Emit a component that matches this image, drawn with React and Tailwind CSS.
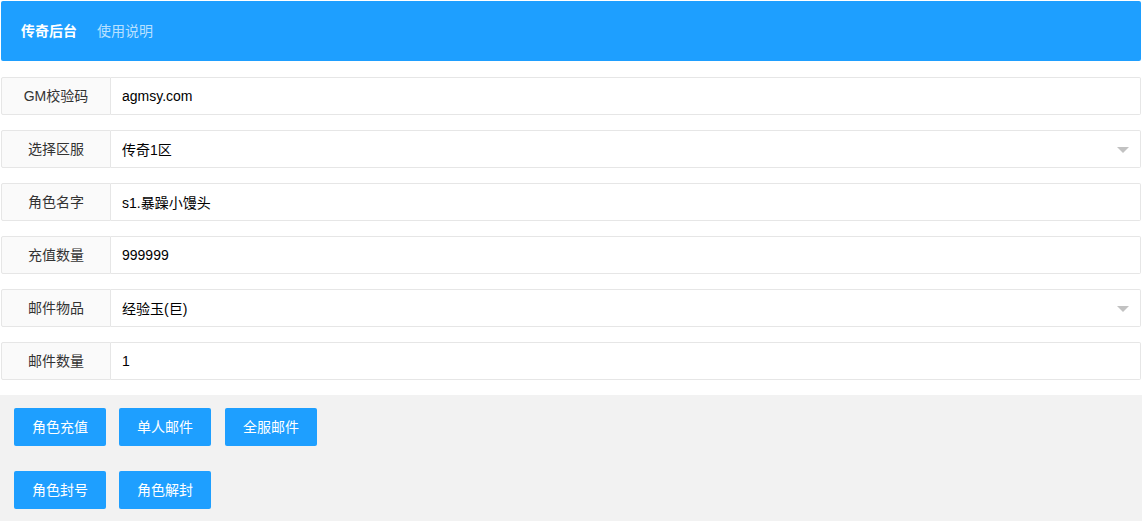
import { useState } from 'react';

const ROWS = [
  { label: 'GM校验码', value: 'agmsy.com' },
  { label: '选择区服', value: '传奇1区', select: true },
  { label: '角色名字', value: 's1.暴躁小馒头' },
  { label: '充值数量', value: '999999' },
  { label: '邮件物品', value: '经验玉(巨)', select: true },
  { label: '邮件数量', value: '1' },
];

const BUTTONS = [
  ['角色充值', '单人邮件', '全服邮件'],
  ['角色封号', '角色解封'],
];

function FormRow({ label, value, select }) {
  const [val, setVal] = useState(value);
  return (
    <div className="flex h-[38px] mb-[15px] mr-px">
      <div className="w-[110px] shrink-0 flex items-center justify-center bg-[#fafafa] border border-[#e6e6e6] rounded-l-[2px] text-[#333]">
        {label}
      </div>
      <div className="relative flex-1 border border-l-0 border-[#e6e6e6] rounded-r-[2px] bg-white">
        <input
          value={val}
          readOnly={select}
          onChange={(e) => setVal(e.target.value)}
          className="w-full h-full pl-[11px] pr-8 outline-none bg-transparent text-[#000] cursor-default"
        />
        {select && (
          <span className="absolute right-[11px] top-[16px] w-0 h-0 border-l-[6px] border-r-[6px] border-t-[6px] border-l-transparent border-r-transparent border-t-[#c2c2c2]" />
        )}
      </div>
    </div>
  );
}

export default function App() {
  return (
    <div
      className="w-[1142px] h-[521px] overflow-hidden bg-white text-[14px] pt-px pl-px"
      style={{ fontFamily: '"Liberation Sans", "Noto Sans CJK SC", sans-serif' }}
    >
      {/* Header */}
      <div className="h-[60px] mr-px bg-[#1e9fff] rounded-[2px] flex items-center pl-5 gap-5">
        <span className="text-white font-bold">传奇后台</span>
        <span className="text-white/70">使用说明</span>
      </div>

      <div className="mt-4">
        {ROWS.map((r) => (
          <FormRow key={r.label} {...r} />
        ))}
      </div>

      {/* Actions */}
      <div className="-ml-px bg-[#f2f2f2] pt-[13px] pl-[14px] pb-3 flex flex-col gap-[25px]">
        {BUTTONS.map((row, i) => (
          <div key={i} className="flex">
            {row.map((b, j) => (
              <button
                key={b}
                className={`h-[38px] px-[18px] bg-[#1e9fff] text-white rounded-[2px] hover:opacity-80 ${
                  j === 0 ? '' : j === 1 ? 'ml-[13px]' : 'ml-[14px]'
                }`}
              >
                {b}
              </button>
            ))}
          </div>
        ))}
      </div>
    </div>
  );
}
